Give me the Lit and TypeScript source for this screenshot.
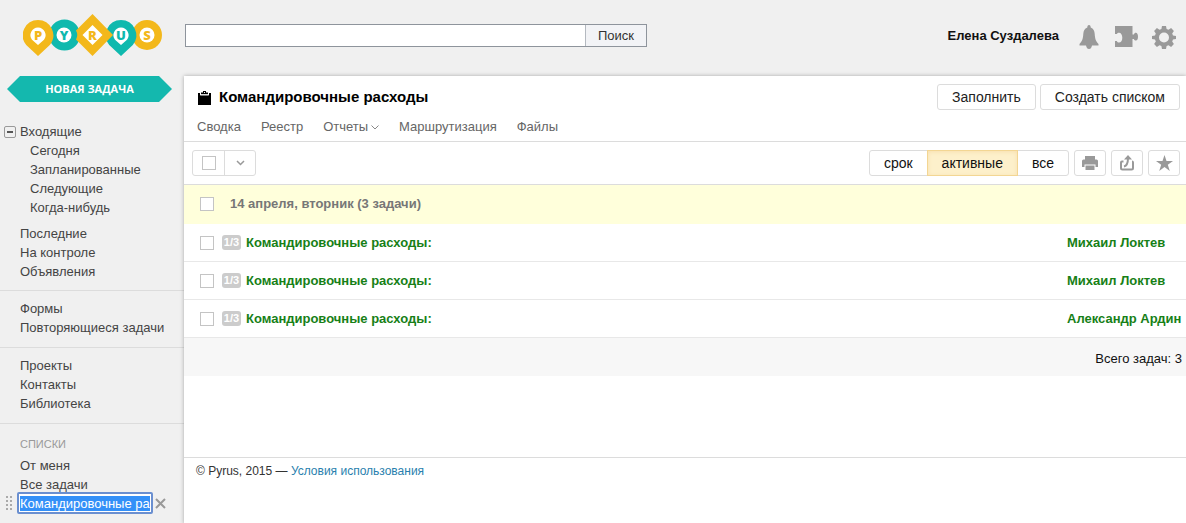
import { LitElement, html, css, svg } from "lit";
import { customElement, state, query } from "lit/decorators.js";
import { classMap } from "lit/directives/class-map.js";

interface Task {
  step: string;
  title: string;
  owner: string;
}

const INBOX = ["Сегодня", "Запланированные", "Следующие", "Когда-нибудь"];
const RECENT = ["Последние", "На контроле", "Объявления"];
const FORMS = ["Формы", "Повторяющиеся задачи"];
const LIBRARY = ["Проекты", "Контакты", "Библиотека"];
const LISTS = ["От меня", "Все задачи"];
const FILTERS = ["срок", "активные", "все"];
const TASKS: Task[] = [
  { step: "1/3", title: "Командировочные расходы:", owner: "Михаил Локтев" },
  { step: "1/3", title: "Командировочные расходы:", owner: "Михаил Локтев" },
  { step: "1/3", title: "Командировочные расходы:", owner: "Александр Ардин" },
];

const reset = css`
  * {
    box-sizing: border-box;
  }
  :host {
    display: block;
    font: 13px/19px "Liberation Sans", Arial, sans-serif;
  }
  button,
  input {
    font: inherit;
    color: inherit;
    margin: 0;
    padding: 0;
    border: 0;
    background: none;
  }
  a {
    color: inherit;
    text-decoration: none;
  }
  svg {
    display: block;
  }
  ul {
    list-style: none;
    margin: 0;
    padding: 0;
  }
`;

@customElement("pyrus-logo")
export class PyrusLogo extends LitElement {
  static styles = css`
    :host {
      display: block;
    }
    svg {
      display: block;
    }
    text {
      font: 800 13px "Open Sans", "Liberation Sans", sans-serif;
      text-anchor: middle;
    }
    .gold {
      fill: #f3b81b;
    }
    .teal {
      fill: #0fb9ae;
    }
    .white {
      fill: #fff;
    }
  `;

  private letter(x: number, char: string, tone: string) {
    return svg`<text class=${tone} x=${x} y="25.5">${char}</text>`;
  }

  render() {
    return html`<svg width="139" height="42" viewBox="0 0 139 42" role="img" aria-label="Pyrus">
      <circle class="teal" cx="41.500" cy="21" r="15.500" />
      <circle class="gold" cx="124" cy="21" r="15" />
      <path class="teal" d="M98 6a15.300 15.300 0 0 1 11.800 25L98 42 86.200 31A15.300 15.300 0 0 1 98 6Z" />
      <path class="gold" d="M15 6a15.300 15.300 0 0 1 11.800 25L15 42 3.200 31A15.300 15.300 0 0 1 15 6Z" />
      <path class="gold" d="M69.500 0 90 21 69.500 42 53 25.500Q55.500 21 53 16.500Z" />
      <path class="white" d="M15 13.500a7.700 7.700 0 0 1 6 12.300L15 31l-6-5.200a7.700 7.700 0 0 1 6-12.300Z" />
      <circle class="white" cx="41" cy="21" r="7.500" />
      <path class="white" d="M69.500 11 79.500 21 69.500 31 59.500 21Z" />
      <path class="white" d="M98 13.500a7.700 7.700 0 0 1 6 12.300L98 31l-6-5.200a7.700 7.700 0 0 1 6-12.300Z" />
      <circle class="white" cx="124" cy="21" r="7.500" />
      ${this.letter(15, "P", "gold")} ${this.letter(41, "Y", "teal")}
      ${this.letter(69.5, "R", "gold")} ${this.letter(98, "U", "teal")}
      ${this.letter(124, "S", "gold")}
    </svg>`;
  }
}

@customElement("pyrus-header")
export class PyrusHeader extends LitElement {
  static styles = [
    reset,
    css`
      .bar {
        display: flex;
        align-items: center;
        height: 76px;
        padding: 0 10px 6px 23px;
      }
      .search {
        display: flex;
        width: 462px;
        height: 23px;
        margin-left: 23px;
        border: 1px solid #8e949c;
        background: #fff;
      }
      .search input {
        flex: 1;
        min-width: 0;
        padding: 0 6px;
        outline: none;
      }
      .search button {
        width: 61px;
        border-left: 1px solid #b4b9c0;
        background: #f2f3f6;
        color: #333;
      }
      .user {
        margin-left: auto;
        font-weight: bold;
        color: #111;
      }
      .icons {
        display: flex;
        align-items: center;
        gap: 14px;
        margin: 4px 0 0 20px;
        fill: #999;
      }
    `,
  ];

  render() {
    return html`<header class="bar">
      <a href="#" aria-label="Pyrus"><pyrus-logo></pyrus-logo></a>
      <form class="search" role="search" @submit=${(e: Event) => e.preventDefault()}>
        <input type="text" aria-label="Поиск" />
        <button type="submit">Поиск</button>
      </form>
      <a class="user" href="#">Елена Суздалева</a>
      <div class="icons">
        <button aria-label="Уведомления">
          <svg width="21" height="24" viewBox="2 0 21 24">
            <path d="M12 0c1.200 0 1.700 1 1.700 2.500C16.500 3.500 17.500 6 17.700 9c.3 5 1.300 7.500 3.800 10v1.500h-6.500C14.500 23 13.500 24 12 24s-2.500-1-3-3.500H2.500V19c2.500-2.500 3.500-5 3.800-10 .2-3 1.200-5.500 4-6.500C10.300 1 10.800 0 12 0Z" />
          </svg>
        </button>
        <button aria-label="Расширения">
          <svg width="24" height="24" viewBox="0 0 24 24">
            <path d="M1 1h17.500v8.500h1.300c.5-1.200 1.200-1.700 2-1.700 1.500 0 2.200 1.700 2.200 3.900s-.7 3.900-2.200 3.900c-.8 0-1.500-.5-2-1.700h-1.300V22H1v-6h1.800c.5 1 1.200 1.500 2.200 1.500 2 0 3.300-2 3.300-4.800S7 7.800 5 7.800C4 7.800 3.300 8.300 2.800 9H1Z" />
          </svg>
        </button>
        <button aria-label="Настройки">
          <svg width="24" height="24" viewBox="0 0 24 24">
            <path fill-rule="evenodd" d="M10 1h4l.6 3 1.900.8 2.600-1.700 2.800 2.800-1.700 2.600.8 1.900 3 .6v3l-3 .6-.8 1.900 1.700 2.600-2.800 2.800-2.600-1.700-1.900.8-.6 3h-4l-.6-3-1.900-.8-2.600 1.700-2.800-2.800 1.700-2.600-.8-1.900-3-.6v-3l3-.6.8-1.900-1.700-2.600 2.800-2.800 2.600 1.700L9.400 4ZM12 7.500a5 5 0 1 0 0 10 5 5 0 0 0 0-10Z" />
          </svg>
        </button>
      </div>
    </header>`;
  }
}

@customElement("pyrus-sidebar")
export class PyrusSidebar extends LitElement {
  @state() private expanded = true;
  @query(".rename") private renameBox!: HTMLInputElement;

  static styles = [
    reset,
    css`
      :host {
        color: #444;
      }
      .create {
        display: block;
        width: 165px;
        height: 26px;
        margin-left: 7px;
        background: #14b8ae;
        clip-path: polygon(0 50%, 13px 0, calc(100% - 13px) 0, 100% 50%, calc(100% - 13px) 100%, 13px 100%);
        color: #fff;
        font: bold 11px/26px "Open Sans", "Liberation Sans", sans-serif;
      }
      .group {
        padding: 8px 0 10px 20px;
        border-bottom: 1px solid #dcdcdc;
      }
      .inbox {
        padding-top: 20px;
        padding-bottom: 9px;
      }
      .lists {
        padding-top: 11px;
        border: 0;
      }
      .parent {
        display: flex;
        align-items: center;
        gap: 4px;
        margin-left: -16px;
      }
      .toggle {
        display: grid;
        place-items: center;
        width: 12px;
        height: 12px;
        border: 1px solid #999;
        border-radius: 2px;
      }
      .nested {
        padding: 0 0 7px 10px;
      }
      .caption {
        margin: 0 0 2px;
        font-size: 11px;
        font-weight: normal;
        line-height: 19px;
        color: #999;
        text-transform: uppercase;
      }
      .editing {
        display: flex;
        align-items: center;
        margin: -2px 0 0 -15px;
      }
      .grip {
        width: 12px;
      }
      .rename {
        width: 136px;
        height: 22px;
        padding: 1px;
        border: 2px solid #6a8fd0;
        border-radius: 2px;
        background: #fff;
        outline: none;
      }
      .rename::selection {
        background: #3390f8;
        color: #fff;
      }
      .close {
        margin-left: 2px;
      }
    `,
  ];

  firstUpdated() {
    this.renameBox.focus();
    this.renameBox.select();
    this.renameBox.scrollLeft = 0;
  }

  private links(items: string[]) {
    return items.map((item) => html`<li><a href="#">${item}</a></li>`);
  }

  render() {
    return html`<nav>
      <button class="create">НОВАЯ ЗАДАЧА</button>
      <div class="group inbox">
        <div class="parent">
          <button
            class="toggle"
            aria-label="Свернуть"
            aria-expanded=${this.expanded}
            @click=${() => (this.expanded = !this.expanded)}
          >
            <svg width="6" height="2"><rect width="6" height="2" fill="#555" /></svg>
          </button>
          <a href="#">Входящие</a>
        </div>
        ${this.expanded ? html`<ul class="nested">${this.links(INBOX)}</ul>` : ""}
        <ul>${this.links(RECENT)}</ul>
      </div>
      <ul class="group">${this.links(FORMS)}</ul>
      <ul class="group">${this.links(LIBRARY)}</ul>
      <div class="group lists">
        <h2 class="caption">Списки</h2>
        <ul>${this.links(LISTS)}</ul>
        <div class="editing">
          <svg class="grip" width="12" height="14" viewBox="0 0 12 14" fill="#aaa">
            ${[0, 4, 8, 12].map(
              (y) => svg`<rect x="1" y=${y} width="2" height="2" /><rect x="5" y=${y} width="2" height="2" />`
            )}
          </svg>
          <input class="rename" type="text" aria-label="Название списка" .value=${"Командировочные расходы"} />
          <button class="close" aria-label="Отменить">
            <svg width="11" height="11" viewBox="0 0 11 11" stroke="#999" stroke-width="2">
              <path d="M1 1l9 9M10 1l-9 9" />
            </svg>
          </button>
        </div>
      </div>
    </nav>`;
  }
}

@customElement("task-panel")
export class TaskPanel extends LitElement {
  @state() private filter = "активные";

  static styles = [
    reset,
    css`
      :host {
        display: flex;
        flex-direction: column;
        color: #111;
        background: #fff;
        box-shadow: 0 0 4px rgba(0, 0, 0, 0.3);
      }
      .heading {
        display: flex;
        align-items: center;
        gap: 4px;
        padding: 8px 6px 0 14px;
      }
      h1 {
        flex: 1;
        margin: 0 0 0 4px;
        font-size: 15px;
        line-height: 26px;
        color: #000;
      }
      .btn {
        height: 26px;
        padding: 0 14px;
        border: 1px solid #dcdcdc;
        border-radius: 3px;
        background: #fff;
        font-size: 14px;
        color: #222;
      }
      .tabs {
        display: flex;
        gap: 20px;
        padding: 7px 13px 5px;
        border-bottom: 1px solid #dcdcdc;
        color: #666;
      }
      .tabs a {
        display: flex;
        align-items: center;
        gap: 3px;
      }
      .toolbar {
        display: flex;
        align-items: center;
        gap: 5px;
        height: 43px;
        padding: 0 6px 0 8px;
        border-bottom: 1px solid #dcdcdc;
      }
      .picker {
        display: flex;
        width: 64px;
        height: 26px;
        margin-right: auto;
        border: 1px solid #dcdcdc;
        border-radius: 3px;
      }
      .picker label {
        display: grid;
        place-items: center;
        width: 32px;
        border-right: 1px solid #dcdcdc;
      }
      .picker button {
        display: grid;
        place-items: center;
        flex: 1;
      }
      input[type="checkbox"] {
        display: block;
        appearance: none;
        width: 14px;
        height: 14px;
        border: 1px solid #c4c4c4;
        background: #fff;
      }
      input[type="checkbox"]:checked {
        background: #999;
      }
      .filters {
        display: flex;
        height: 26px;
        border: 1px solid #dcdcdc;
        border-radius: 3px;
        font-size: 14px;
      }
      .filters button {
        padding: 0 14px;
      }
      .filters .on {
        margin: -1px 0;
        border: 1px solid #f3d693;
        background: #fdf0cb;
        box-shadow: inset 0 1px 4px #f8dfae;
      }
      .tool {
        display: grid;
        place-items: center;
        width: 32px;
        height: 26px;
        border: 1px solid #dcdcdc;
        border-radius: 3px;
        fill: #999;
      }
      table {
        width: 100%;
        border-collapse: separate;
        border-spacing: 0;
        font-weight: bold;
      }
      th,
      td {
        height: 38px;
        padding: 0;
        text-align: left;
      }
      .check {
        width: 38px;
        padding-left: 16px;
      }
      .day {
        background: #ffffdb;
        color: #777;
      }
      .day th {
        height: 39px;
        padding-bottom: 2px;
      }
      .day th:last-child {
        padding-left: 8px;
      }
      .task {
        color: #178017;
      }
      .task td {
        border-bottom: 1px solid #e8e8e8;
      }
      .name {
        display: flex;
        align-items: center;
        gap: 5px;
      }
      .step {
        width: 19px;
        border-radius: 3px;
        background: #ccc;
        color: #fff;
        font-size: 11px;
        line-height: 15px;
        text-align: center;
      }
      .owner {
        width: 119px;
        white-space: nowrap;
      }
      .total td {
        padding: 2px 4px 0 0;
        background: #f7f7f7;
        font-weight: normal;
        text-align: right;
      }
      footer {
        margin-top: 81px;
        padding: 4px 12px;
        border-top: 1px solid #dcdcdc;
        font-size: 12px;
        line-height: 19px;
        color: #333;
      }
      footer a {
        color: #2a7fae;
      }
    `,
  ];

  render() {
    return html`
      <div class="heading">
        <svg width="13" height="15" viewBox="0 0 13 15">
          <path d="M0 3h2v2.500h9V3h2v12H0Z" />
          <path d="M3 4.500V2.500h2V1h3v1.500h2v2Z" />
          <path d="M0 5.500h13V15H0Z" />
          <path d="M2.500 4.800h8" stroke="#fff" />
          <path d="M6 2.500h1" stroke="#fff" />
        </svg>
        <h1>Командировочные расходы</h1>
        <button class="btn">Заполнить</button>
        <button class="btn">Создать списком</button>
      </div>
      <nav class="tabs">
        <a href="#">Сводка</a>
        <a href="#">Реестр</a>
        <a href="#">Отчеты
          <svg width="8" height="6" viewBox="0 0 8 6" fill="none" stroke="#888"><path d="M.5 1.500l3.500 3.500 3.500-3.500" /></svg>
        </a>
        <a href="#">Маршрутизация</a>
        <a href="#">Файлы</a>
      </nav>
      <div class="toolbar">
        <div class="picker">
          <label><input type="checkbox" aria-label="Выбрать все" /></label>
          <button aria-label="Варианты выбора">
            <svg width="9" height="6" viewBox="0 0 9 6" fill="none" stroke="#999" stroke-width="1.500">
              <path d="M1 1l3.500 3.500L8 1" />
            </svg>
          </button>
        </div>
        <div class="filters">
          ${FILTERS.map(
            (f) => html`<button
              class=${classMap({ on: f === this.filter })}
              aria-pressed=${f === this.filter}
              @click=${() => (this.filter = f)}
            >${f}</button>`
          )}
        </div>
        <button class="tool" aria-label="Печать">
          <svg width="16" height="14" viewBox="0 0 16 14">
            <path d="M3 0h10v3.500H3ZM1.500 3.500h13A1.500 1.500 0 0 1 16 5V11h-2.500V8.500h-11V11H0V5A1.500 1.500 0 0 1 1.500 3.500ZM3.500 9.500h9V14h-9Z" />
          </svg>
        </button>
        <button class="tool" aria-label="Поделиться">
          <svg width="16" height="16" viewBox="0 0 16 16" fill="none" stroke="#999" stroke-width="2">
            <path d="M4.500 6.500H3Q2 6.500 2 7.500V13Q2 14.500 3.500 14.500h9Q14 14.500 14 13V7.500Q14 6.500 13 6.500" />
            <path d="M5 11.500Q9 10.500 9 3" />
            <path d="M9 0l4 4.500H5Z" fill="#999" stroke="none" />
          </svg>
        </button>
        <button class="tool" aria-label="В избранное">
          <svg width="17" height="16" viewBox="0 0 17 16">
            <path d="M8.500 0l2 6H17l-5.200 3.700 2 6.300-5.300-3.900L3.200 16l2-6.300L0 6h6.500Z" />
          </svg>
        </button>
      </div>
      <table>
        <thead>
          <tr class="day">
            <th class="check"><input type="checkbox" aria-label="Выбрать день" /></th>
            <th colspan="2">14 апреля, вторник (3 задачи)</th>
          </tr>
        </thead>
        <tbody>
          ${TASKS.map(
            (t) => html`<tr class="task">
              <td class="check"><input type="checkbox" aria-label="Выбрать задачу" /></td>
              <td><div class="name"><span class="step">${t.step}</span><a href="#">${t.title}</a></div></td>
              <td class="owner">${t.owner}</td>
            </tr>`
          )}
        </tbody>
        <tfoot>
          <tr class="total"><td colspan="3">Всего задач: 3</td></tr>
        </tfoot>
      </table>
      <footer>© Pyrus, 2015 — <a href="#">Условия использования</a></footer>
    `;
  }
}

@customElement("app-root")
export class AppRoot extends LitElement {
  static styles = css`
    :host {
      display: grid;
      grid-template: auto 1fr / 184px minmax(0, 1fr);
      min-height: 100vh;
      overflow: hidden;
      background: #f0f0f0;
    }
    pyrus-header {
      grid-column: 1 / -1;
    }
  `;

  render() {
    return html`<pyrus-header></pyrus-header>
      <pyrus-sidebar></pyrus-sidebar>
      <task-panel></task-panel>`;
  }
}
